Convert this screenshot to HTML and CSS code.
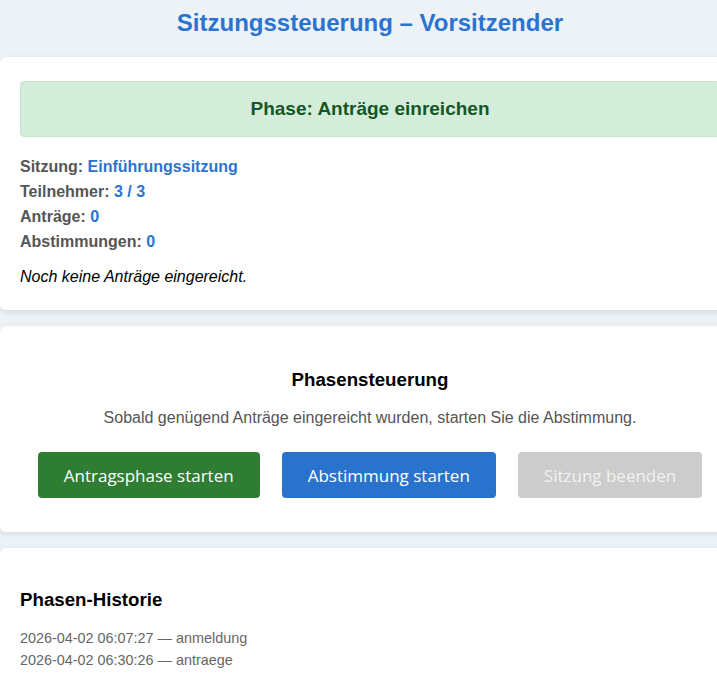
FILE: index.html
```html
<!DOCTYPE html>
<html lang="de">
<head>
  <meta charset="UTF-8">
  <meta name="viewport" content="width=device-width, initial-scale=1.0">
  <title>Sitzungssteuerung – Vorsitzender</title>
  <link rel="stylesheet" href="styles.css">
</head>
<body>
  <header class="top">
    <h1>Sitzungssteuerung – Vorsitzender</h1>
  </header>

  <main class="container">
    <section class="card">
      <div class="phase-box">Phase: Anträge einreichen</div>
      <div class="info">
        <div class="info-row">Sitzung: <span class="val">Einführungssitzung</span></div>
        <div class="info-row">Teilnehmer: <span class="val">3 / 3</span></div>
        <div class="info-row">Anträge: <span class="val">0</span></div>
        <div class="info-row">Abstimmungen: <span class="val">0</span></div>
      </div>
      <p class="empty">Noch keine Anträge eingereicht.</p>
    </section>

    <section class="card center">
      <h3>Phasensteuerung</h3>
      <p class="hint">Sobald genügend Anträge eingereicht wurden, starten Sie die Abstimmung.</p>
      <div class="buttons">
        <button class="btn btn-green">Antragsphase starten</button>
        <button class="btn btn-blue">Abstimmung starten</button>
        <button class="btn btn-gray" disabled>Sitzung beenden</button>
      </div>
    </section>

    <section class="card">
      <h3 class="history-title">Phasen-Historie</h3>
      <ul class="history">
        <li>2026-04-02 06:07:27 — anmeldung</li>
        <li>2026-04-02 06:30:26 — antraege</li>
      </ul>
    </section>
  </main>
</body>
</html>
```

FILE: styles.css
```css
html {
  overflow-x: hidden;
}
body {
  font-family: 'Liberation Sans', Arial, sans-serif;
  background: #edf2f7;
  margin: 0;
  width: 740px;
}
.top {
  background: #edf2f7;
  text-align: center;
  padding: 9px 0 20px;
}
.top h1 {
  margin: 0;
  font-size: 24px;
  color: #2a74d0;
}
.card {
  background: white;
  border-radius: 6px;
  box-shadow: 0 2px 6px rgba(0,0,0,0.1);
  padding: 24px 20px;
  margin-bottom: 16px;
}
.center {
  text-align: center;
}
.phase-box {
  background: #d4edda;
  border: 1px solid #c3e6cb;
  border-radius: 4px;
  color: #155724;
  font-weight: bold;
  font-size: 19px;
  text-align: center;
  padding: 16px;
  margin-bottom: 17px;
}
.info-row {
  font-weight: bold;
  color: #555;
  line-height: 25px;
}
.val {
  color: #2a74d0;
}
.empty {
  font-style: italic;
  margin: 14px 0 0;
}
h3 {
  font-size: 18.7px;
  color: #000;
}
.hint {
  color: #555;
  margin-top: 0;
}
.buttons {
  display: flex;
  justify-content: center;
  gap: 22px;
  margin: 25px 0 10px;
}
.btn {
  font-family: 'Open Sans', sans-serif;
  font-size: 17px;
  color: white;
  border: none;
  border-radius: 4px;
  height: 46px;
  padding: 0 26px;
  cursor: pointer;
}
.btn-green {
  background: #2e7d32;
}
.btn-blue {
  background: #2a73cc;
}
.btn-gray {
  background: #cccccc;
  color: #f2f2f2;
  cursor: default;
}
.history-title {
  margin-top: 17px;
  margin-bottom: 16px;
}
.history {
  list-style: none;
  padding: 0;
  margin: 0;
  font-size: 14.4px;
  color: #666;
  line-height: 22px;
}
```
